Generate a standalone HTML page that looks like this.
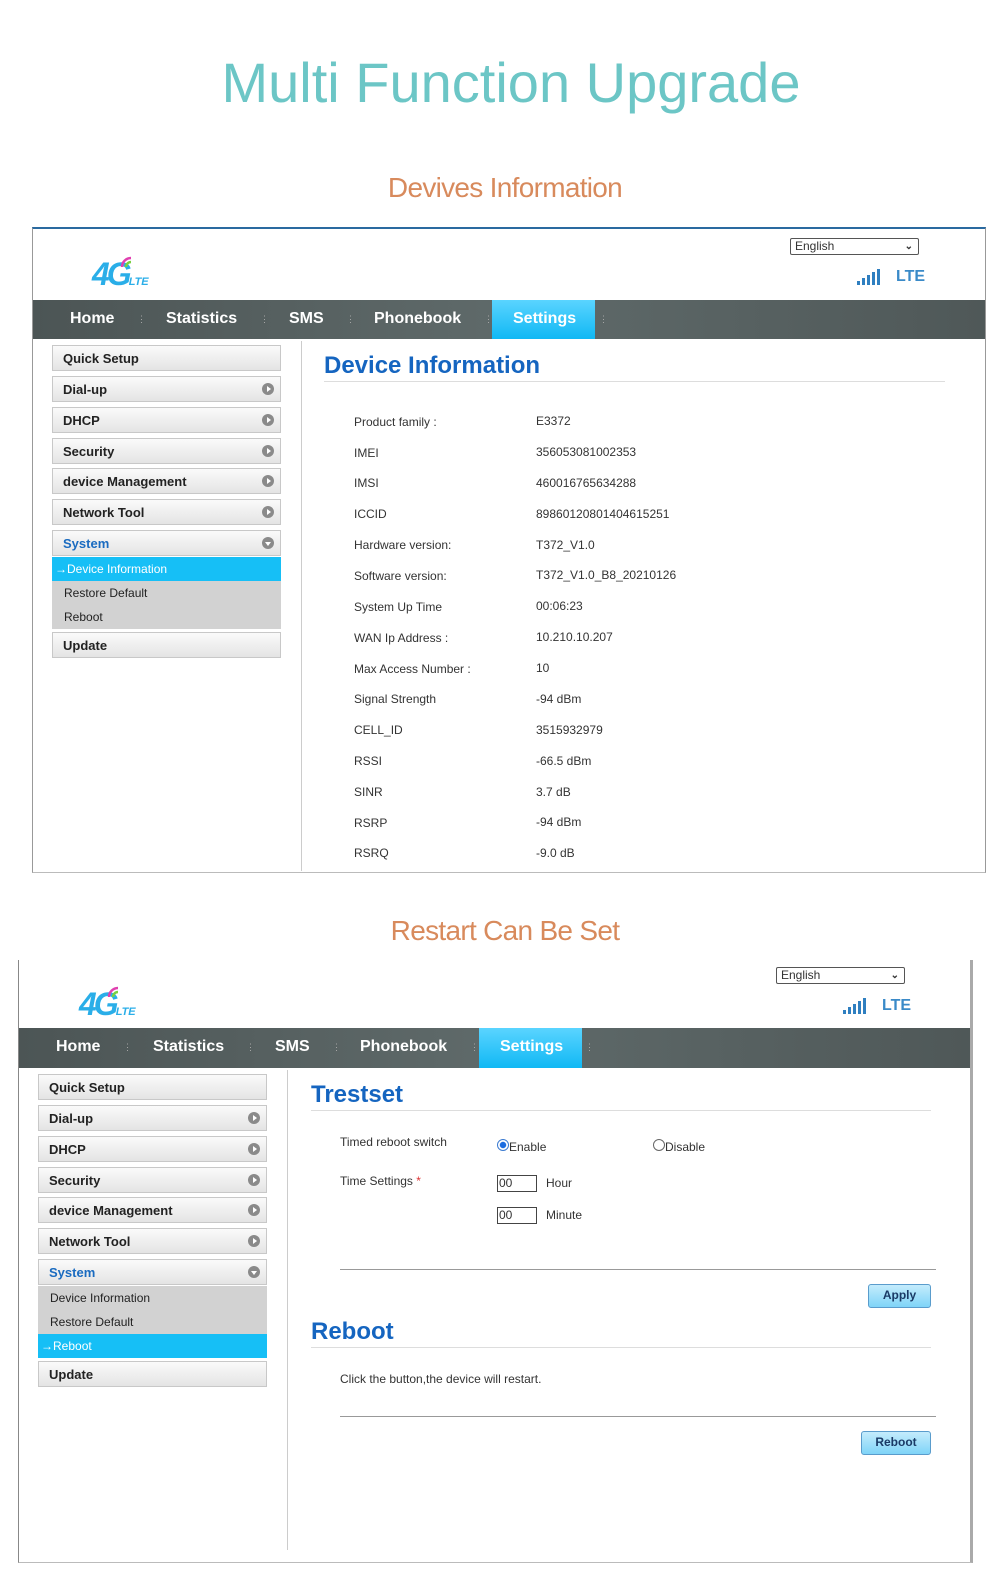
<!DOCTYPE html>
<html><head><meta charset="utf-8"><style>
*{margin:0;padding:0;box-sizing:border-box}
html,body{width:1000px;height:1578px;overflow:hidden}
body{background:#fff;font-family:"Liberation Sans",Arial,sans-serif;position:relative}
.h1{position:absolute;left:0;width:1022px;text-align:center;color:#6cc6c6;font-size:56px;top:50px;letter-spacing:0}
.h2{position:absolute;left:0;width:1010px;text-align:center;color:#d88a5c;font-size:28px;letter-spacing:-0.7px}
.panel{position:absolute;background:#fff}
.panel *{position:absolute}
.logo{font-style:italic;font-weight:bold;color:#2aaee8;font-size:32px;letter-spacing:-3px}
.logo span{position:static;font-size:11px;letter-spacing:0}
.sel{width:129px;height:17px;border:1px solid #555;border-radius:2px;font-size:12px;padding-left:4px;line-height:15px;color:#333;background:#fff}
.sel i{right:5px;top:0;font-style:normal;font-size:10px;font-weight:bold}
.bar{background:#2f7fc0;width:3px;bottom:0}
.lte{color:#3a8ac8;font-weight:bold;font-size:16px}
.nav{left:0;right:0;height:39px;background:linear-gradient(90deg,#4c5555,#5f6a6a 50%,#4f5858)}
.nav b{color:#fff;font-size:16px;top:10px}
.nav s{color:#aaa;font-size:9px;top:14px;text-decoration:none}
.tab{background:linear-gradient(#5ad4ff,#10b8f4);height:39px;width:103px;top:0}
.itm{left:19px;width:229px;height:26px;border:1px solid #c8c8c8;background:linear-gradient(#fafafa,#e4e4e4);font-size:13px;font-weight:bold;color:#222;padding:5px 10px}
.arr{right:6px;top:6px;width:12px;height:12px;border-radius:50%;background:#8a8a8a}
.arr:after{content:"";position:absolute;left:5px;top:3px;border-left:4px solid #fff;border-top:3px solid transparent;border-bottom:3px solid transparent}
.arr.d:after{left:3px;top:5px;border-top:4px solid #fff;border-left:3px solid transparent;border-right:3px solid transparent;border-bottom:0}
.sub{left:19px;width:229px;height:24px;background:#d2d2d2;font-size:12px;color:#222;padding:5px 12px;line-height:14px}
.sub.on{background:#16bff6;color:#fff;padding-left:3px}
.vd{left:268px;width:1px;background:#ccc}
.tt{color:#1565c0;font-weight:bold;font-size:24px}
.ul{height:1px;background:#ddd}
.lb{font-size:12px;color:#333}
.hr{height:1px;background:#999}
.btn{border:1px solid #5a9ccc;border-radius:3px;background:linear-gradient(#c4ecfc,#7fd4f8);color:#1a3a66;font-weight:bold;font-size:12px;text-align:center;line-height:21px}
.inp{width:40px;height:17px;border:1px solid #444;font-size:12px;line-height:15px;padding-left:1px;color:#333}
</style></head><body>
<div class="h1">Multi Function Upgrade</div>
<div class="h2" style="top:172px">Devives Information</div>
<div class="h2" style="top:915px">Restart Can Be Set</div>

<div class="panel" style="left:32px;top:227px;width:954px;height:646px;border-top:2px solid #2a6aa0;border-left:1px solid #999;border-right:1px solid #999;border-bottom:1px solid #bbb">
<div class="logo" style="left:59px;top:27px">4G<span>LTE</span></div>
<svg style="left:86px;top:24px" width="20" height="16"><path d="M3 14a9 9 0 0 1 9-9" stroke="#e040b0" stroke-width="2.5" fill="none"/><path d="M7 14a5 5 0 0 1 5-5" stroke="#7ad040" stroke-width="2.5" fill="none"/></svg>
<div class="sel" style="left:757px;top:9px">English<i>⌄</i></div>
<div style="left:824px;top:40px;width:26px;height:16px"><div class="bar" style="left:0;height:4px"></div><div class="bar" style="left:5px;height:7px"></div><div class="bar" style="left:10px;height:10px"></div><div class="bar" style="left:15px;height:13px"></div><div class="bar" style="left:20px;height:16px"></div></div>
<div class="lte" style="left:863px;top:39px">LTE</div>
<div class="nav" style="top:71px">
<div class="tab" style="left:459px"></div>
<b style="left:37px">Home</b><s style="left:104px">⋮</s>
<b style="left:133px">Statistics</b><s style="left:227px">⋮</s>
<b style="left:256px">SMS</b><s style="left:313px">⋮</s>
<b style="left:341px">Phonebook</b><s style="left:451px">⋮</s>
<b style="left:480px">Settings</b><s style="left:566px">⋮</s>
</div>
<div class="vd" style="top:112px;height:530px"></div>
<div class="itm" style="top:116px">Quick Setup</div>
<div class="itm" style="top:147px">Dial-up<span class="arr"></span></div>
<div class="itm" style="top:178px">DHCP<span class="arr"></span></div>
<div class="itm" style="top:209px">Security<span class="arr"></span></div>
<div class="itm" style="top:239px">device Management<span class="arr"></span></div>
<div class="itm" style="top:270px">Network Tool<span class="arr"></span></div>
<div class="itm" style="top:301px;color:#1a6bc0">System<span class="arr d"></span></div>
<div class="sub on" style="top:328px">→Device Information</div>
<div class="sub" style="top:352px">Restore Default</div>
<div class="sub" style="top:376px">Reboot</div>
<div class="itm" style="top:403px">Update</div>
<div class="tt" style="left:291px;top:123px">Device Information</div>
<div class="ul" style="left:291px;top:152px;width:621px"></div>
<div class="lb" style="left:321px;top:186px">Product family :</div><div class="lb" style="left:503px;top:185px">E3372</div>
<div class="lb" style="left:321px;top:217px">IMEI</div><div class="lb" style="left:503px;top:216px">356053081002353</div>
<div class="lb" style="left:321px;top:247px">IMSI</div><div class="lb" style="left:503px;top:247px">460016765634288</div>
<div class="lb" style="left:321px;top:278px">ICCID</div><div class="lb" style="left:503px;top:278px">89860120801404615251</div>
<div class="lb" style="left:321px;top:309px">Hardware version:</div><div class="lb" style="left:503px;top:309px">T372_V1.0</div>
<div class="lb" style="left:321px;top:340px">Software version:</div><div class="lb" style="left:503px;top:339px">T372_V1.0_B8_20210126</div>
<div class="lb" style="left:321px;top:371px">System Up Time</div><div class="lb" style="left:503px;top:370px">00:06:23</div>
<div class="lb" style="left:321px;top:402px">WAN Ip Address :</div><div class="lb" style="left:503px;top:401px">10.210.10.207</div>
<div class="lb" style="left:321px;top:433px">Max Access Number :</div><div class="lb" style="left:503px;top:432px">10</div>
<div class="lb" style="left:321px;top:463px">Signal Strength</div><div class="lb" style="left:503px;top:463px">-94 dBm</div>
<div class="lb" style="left:321px;top:494px">CELL_ID</div><div class="lb" style="left:503px;top:494px">3515932979</div>
<div class="lb" style="left:321px;top:525px">RSSI</div><div class="lb" style="left:503px;top:525px">-66.5 dBm</div>
<div class="lb" style="left:321px;top:556px">SINR</div><div class="lb" style="left:503px;top:556px">3.7 dB</div>
<div class="lb" style="left:321px;top:587px">RSRP</div><div class="lb" style="left:503px;top:586px">-94 dBm</div>
<div class="lb" style="left:321px;top:617px">RSRQ</div><div class="lb" style="left:503px;top:617px">-9.0 dB</div>
</div>

<div class="panel" style="left:18px;top:960px;width:955px;height:603px;border-left:1px solid #888;border-right:3px solid #aaa;border-bottom:1px solid #bbb">
<div class="logo" style="left:60px;top:26px">4G<span>LTE</span></div>
<svg style="left:87px;top:23px" width="20" height="16"><path d="M3 14a9 9 0 0 1 9-9" stroke="#e040b0" stroke-width="2.5" fill="none"/><path d="M7 14a5 5 0 0 1 5-5" stroke="#7ad040" stroke-width="2.5" fill="none"/></svg>
<div class="sel" style="left:757px;top:7px">English<i>⌄</i></div>
<div style="left:824px;top:38px;width:26px;height:16px"><div class="bar" style="left:0;height:4px"></div><div class="bar" style="left:5px;height:7px"></div><div class="bar" style="left:10px;height:10px"></div><div class="bar" style="left:15px;height:13px"></div><div class="bar" style="left:20px;height:16px"></div></div>
<div class="lte" style="left:863px;top:37px">LTE</div>
<div class="nav" style="top:68px;height:40px">
<div class="tab" style="left:460px;height:40px"></div>
<b style="left:37px">Home</b><s style="left:104px">⋮</s>
<b style="left:134px">Statistics</b><s style="left:227px">⋮</s>
<b style="left:256px">SMS</b><s style="left:313px">⋮</s>
<b style="left:341px">Phonebook</b><s style="left:451px">⋮</s>
<b style="left:481px">Settings</b><s style="left:566px">⋮</s>
</div>
<div class="vd" style="top:110px;height:480px"></div>
<div class="itm" style="top:114px">Quick Setup</div>
<div class="itm" style="top:145px">Dial-up<span class="arr"></span></div>
<div class="itm" style="top:176px">DHCP<span class="arr"></span></div>
<div class="itm" style="top:207px">Security<span class="arr"></span></div>
<div class="itm" style="top:237px">device Management<span class="arr"></span></div>
<div class="itm" style="top:268px">Network Tool<span class="arr"></span></div>
<div class="itm" style="top:299px;color:#1a6bc0">System<span class="arr d"></span></div>
<div class="sub" style="top:326px">Device Information</div>
<div class="sub" style="top:350px">Restore Default</div>
<div class="sub on" style="top:374px">→Reboot</div>
<div class="itm" style="top:401px">Update</div>
<div class="tt" style="left:292px;top:121px">Trestset</div>
<div class="ul" style="left:292px;top:150px;width:620px"></div>
<div class="lb" style="left:321px;top:175px">Timed reboot switch</div>
<div style="left:478px;top:179px;width:12px;height:12px;border-radius:50%;border:1px solid #3a7ad0;background:radial-gradient(#1a6ce0 40%,#fff 50%)"></div>
<div class="lb" style="left:490px;top:180px">Enable</div>
<div style="left:634px;top:179px;width:12px;height:12px;border-radius:50%;border:1px solid #666"></div>
<div class="lb" style="left:646px;top:180px">Disable</div>
<div class="lb" style="left:321px;top:214px">Time Settings <span style="position:static;color:#d33">*</span></div>
<div class="inp" style="left:478px;top:215px">00</div><div class="lb" style="left:527px;top:216px">Hour</div>
<div class="inp" style="left:478px;top:247px">00</div><div class="lb" style="left:527px;top:248px">Minute</div>
<div class="hr" style="left:321px;top:309px;width:596px"></div>
<div class="btn" style="left:849px;top:324px;width:63px;height:24px">Apply</div>
<div class="tt" style="left:292px;top:358px">Reboot</div>
<div class="ul" style="left:292px;top:387px;width:620px"></div>
<div class="lb" style="left:321px;top:412px">Click the button,the device will restart.</div>
<div class="hr" style="left:321px;top:456px;width:596px"></div>
<div class="btn" style="left:842px;top:471px;width:70px;height:24px">Reboot</div>
</div>
</body></html>
